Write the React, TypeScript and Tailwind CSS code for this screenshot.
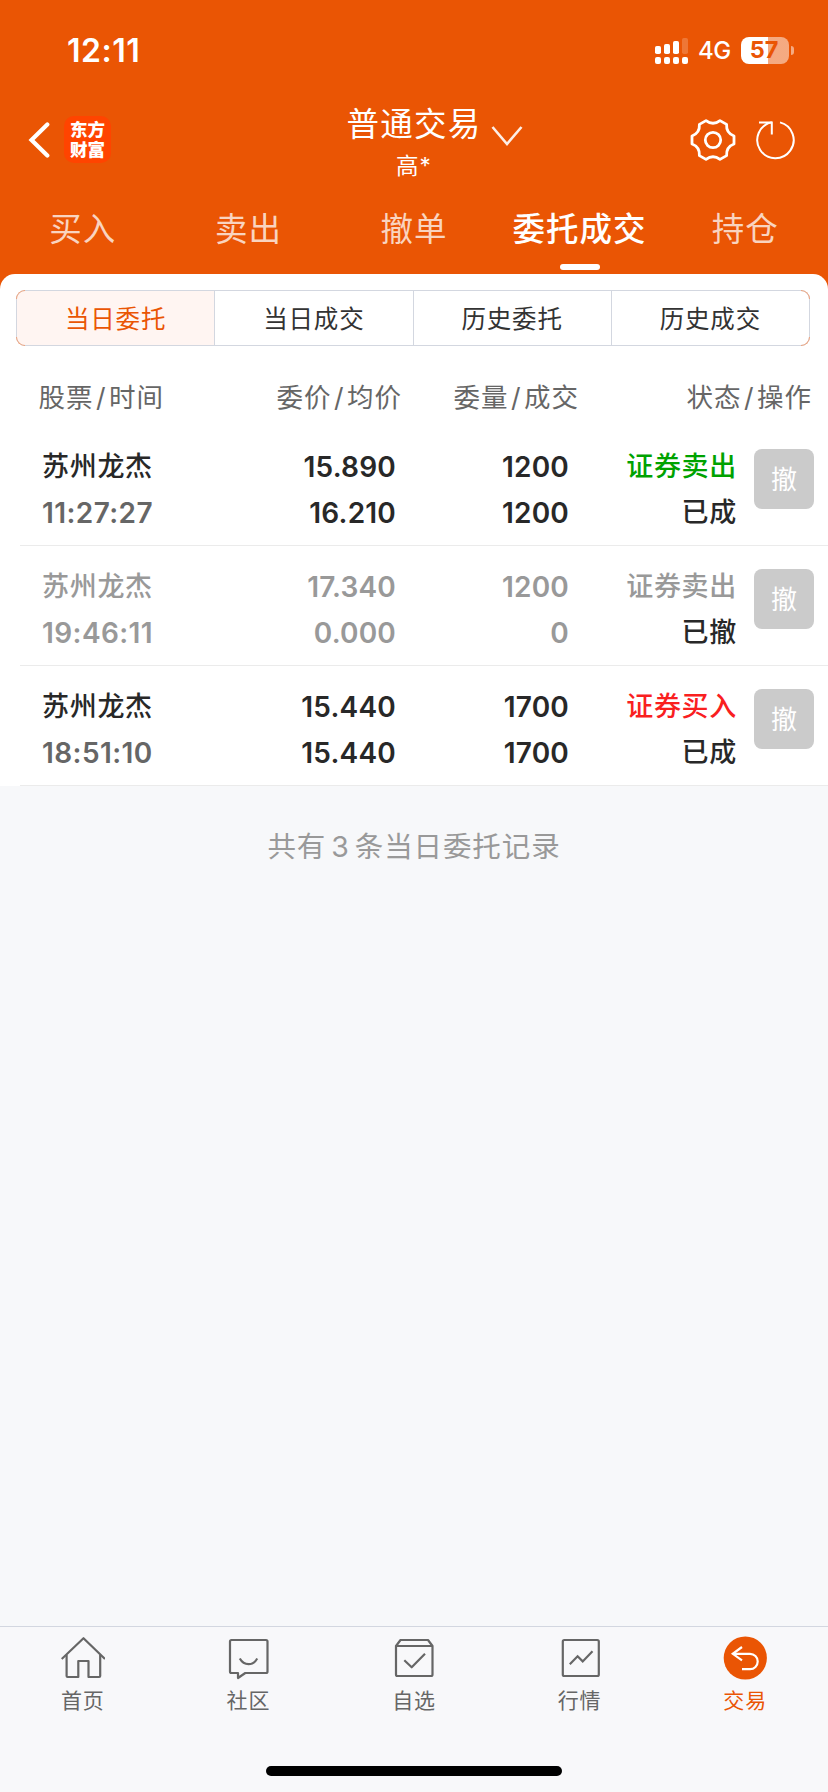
import type { ReactNode } from "react";
import clsx from "clsx";

interface Order {
    name: string;
    time: string;
    price: string;
    avgPrice: string;
    volume: string;
    dealt: string;
    side: string;
    sideColor: string;
    status: string;
    cancelled?: boolean;
}

const orders: Order[] = [
    { name: "苏州龙杰", time: "11:27:27", price: "15.890", avgPrice: "16.210", volume: "1200", dealt: "1200", side: "证券卖出", sideColor: "text-[#00a200]", status: "已成" },
    { name: "苏州龙杰", time: "19:46:11", price: "17.340", avgPrice: "0.000", volume: "1200", dealt: "0", side: "证券卖出", sideColor: "text-[#999999]", status: "已撤", cancelled: true },
    { name: "苏州龙杰", time: "18:51:10", price: "15.440", avgPrice: "15.440", volume: "1700", dealt: "1700", side: "证券买入", sideColor: "text-[#f9201f]", status: "已成" },
];

const tabs = ["买入", "卖出", "撤单", "委托成交", "持仓"];
const filters = ["当日委托", "当日成交", "历史委托", "历史成交"];

const columns = [
    { top: "股票", bottom: "时间", width: "w-[164px]" },
    { top: "委价", bottom: "均价", width: "w-[238px]" },
    { top: "委量", bottom: "成交", width: "w-[177px]" },
    { top: "状态", bottom: "操作", width: "w-[233px]" },
];

function StatusBar() {
    return (
        <div className="flex h-[100px] items-center pl-[67px] pr-[34px] text-white">
            <span className="pt-[1px] text-[32px] leading-none font-semibold tracking-[0.5px]">12:11</span>
            <svg className="ml-auto" width="33" height="27" viewBox="0 0 33 27" fill="white">
                <rect x="0" y="9" width="6" height="8" rx="1.8" />
                <rect x="9" y="7" width="6" height="10" rx="1.8" />
                <rect x="18" y="4" width="6" height="13" rx="1.8" />
                <rect x="27" y="1" width="6" height="16" rx="1.8" opacity="0.2" />
                <rect x="0" y="20" width="6" height="7" rx="2" />
                <rect x="9" y="20" width="6" height="7" rx="2" />
                <rect x="18" y="20" width="6" height="7" rx="2" />
                <rect x="27" y="20" width="6" height="7" rx="2" />
            </svg>
            <span className="ml-[10px] w-[43px] pt-[2px] text-[24px] leading-none font-medium tracking-[-0.5px]">4G</span>
            <div className="flex h-[27px] w-[48px] items-center justify-center rounded-[8px] bg-linear-to-r from-white from-56% to-white/50 to-56%">
                <span className="pr-[2px] text-[23.5px] leading-none font-bold text-[#ea5504]">57</span>
            </div>
            <div className="ml-[2px] h-[9px] w-[3px] rounded-r-full bg-white/50" />
        </div>
    );
}

function TitleBar() {
    return (
        <div className="relative flex h-[90px] items-center text-white">
            <svg className="ml-[28px] -mt-[10px]" width="22" height="36" viewBox="0 0 22 36" fill="none" stroke="white" strokeWidth="4.2">
                <path d="M19.3 2.5 3.5 18 19.3 33.5" strokeLinecap="round" />
            </svg>
            <div className="ml-[14px] -mt-[11px] grid size-[47px] place-content-center rounded-[10px] bg-[#ff4400] text-center text-[17.5px] leading-[20px] font-black">
                <span>东方</span>
                <span>财富</span>
            </div>
            <div className="absolute left-[300px] top-0 flex w-[228px] flex-col items-center">
                <span className="mt-[5px] text-[32.5px] leading-[40px] tracking-[1.3px]">普通交易</span>
                <span className="mt-[6px] text-[22.5px] leading-[30px] tracking-[1px]">高*</span>
            </div>
            <svg className="absolute left-[490px] top-[25px]" width="34" height="22" viewBox="0 0 34 22" fill="none" stroke="white" strokeWidth="2.6">
                <path d="M2.5 2 17 19 31.5 2" opacity="0.9" />
            </svg>
            <svg className="ml-auto -mt-[10px]" width="46" height="46" viewBox="0 0 46 46" fill="none" stroke="white" strokeWidth="2.8" strokeLinejoin="round">
                <path d="M16 3.6Q23 9 30 3.6L36.6 7.4Q36 16 44 19V27Q36 30 36.6 38.6L30 42.4Q23 37 16 42.4L9.4 38.6Q10 30 2 27V19Q10 16 9.4 7.4Z" />
                <circle cx="23" cy="23" r="7.7" />
            </svg>
            <svg className="ml-[20px] mr-[32px] -mt-[10px]" width="40" height="42" viewBox="0 0 40 42" fill="none" stroke="white" strokeWidth="2">
                <path d="M24 3.4A18.2 18.2 0 1 1 15.8 3.2" />
                <path d="M3 3.4H15.8V15.5" />
            </svg>
        </div>
    );
}

function FilterBar() {
    return (
        <div className="relative mt-[16px] ml-[16px] h-[56px] w-[794px]">
            <div className="flex h-full overflow-hidden rounded-[9px] border border-[#d3d7e0]">
                {filters.map((filter, i) => (
                    <div
                        key={filter}
                        className={clsx(
                            "flex-1 pt-[1px] text-center text-[24.5px] leading-[54px] tracking-[0.8px]",
                            i === 0 ? "bg-[#fff5f2] text-[#ea5504]" : "border-l border-[#d3d7e0] text-[#333333]"
                        )}
                    >
                        {filter}
                    </div>
                ))}
            </div>
            {/* tinted corners */}
            <i className="absolute left-0 top-0 size-[9px] rounded-tl-[9px] border-t border-l border-[#eda27c]" />
            <i className="absolute bottom-0 left-0 size-[9px] rounded-bl-[9px] border-b border-l border-[#eda27c]" />
            <i className="absolute right-0 top-0 size-[9px] rounded-tr-[9px] border-t border-r border-[#eda27c]" />
            <i className="absolute right-0 bottom-0 size-[9px] rounded-br-[9px] border-r border-b border-[#eda27c]" />
        </div>
    );
}

function OrderRow({ order }: { order: Order }) {
    const main = order.cancelled ? "text-[#999999]" : "text-[#282828]";
    const sub = order.cancelled ? "text-[#999999]" : "text-[#666666]";
    return (
        <div className="ml-[20px] flex h-[120px] border-b border-[#ebebeb] pt-[18px] text-[28px] leading-[46px] font-semibold tracking-[0.2px]">
            <div className={clsx("flex w-[180px] flex-col pl-[22px]", main)}>
                <span className="text-[27px] font-medium tracking-[0.7px]">{order.name}</span>
                <span className={clsx("tracking-[0.4px]", sub)}>{order.time}</span>
            </div>
            <div className={clsx("flex w-[196px] flex-col text-right", main)}>
                <span>{order.price}</span>
                <span>{order.avgPrice}</span>
            </div>
            <div className={clsx("flex w-[173px] flex-col text-right", main)}>
                <span>{order.volume}</span>
                <span>{order.dealt}</span>
            </div>
            <div className="flex w-[168px] flex-col text-right text-[27px] font-medium tracking-[0.7px] text-[#282828]">
                <span className={order.sideColor}>{order.side}</span>
                <span>{order.status}</span>
            </div>
            <button className="ml-[17px] mt-[5px] size-[60px] rounded-[8px] bg-[#cbcbcb] pt-[1px] text-[26px] leading-[59px] font-normal text-white">撤</button>
        </div>
    );
}

interface NavItemProps {
    label: string;
    active?: boolean;
    children: ReactNode;
}

function NavItem({ label, active, children }: NavItemProps) {
    return (
        <div className={clsx("flex flex-1 flex-col items-center pt-[9px]", active ? "text-[#ea5504]" : "text-[#666666]")}>
            <svg width="44" height="44" viewBox="0 0 44 44" fill="none" stroke="currentColor" strokeWidth="2.2" strokeLinejoin="round">
                {children}
            </svg>
            <span className="mt-[5px] text-[21px] leading-[32px] tracking-[0.8px]">{label}</span>
        </div>
    );
}

function BottomNav() {
    return (
        <nav className="flex h-[166px] flex-col border-t border-[#d3d7e0] bg-[#f8f8fa]">
            <div className="flex flex-1">
                <NavItem label="首页">
                    <path d="M.7 23 22.5 2.2 44 23" />
                    <path d="M5.6 19V40Q5.6 41 6.6 41H17.3V25H27.5V41H38.2Q39.2 41 39.2 40V19" />
                </NavItem>
                <NavItem label="社区">
                    <path d="M5.5 4H40Q41.5 4 41.5 5.5V35.5Q41.5 37 40 37H19.3L12 42V37H5.5Q4 37 4 35.5V5.5Q4 4 5.5 4Z" />
                    <path d="M13.8 22.5Q17 28.2 22.5 28.2T31.2 22.5" />
                </NavItem>
                <NavItem label="自选">
                    <path d="M4 10 8.5 4H36L40.5 10V38.5Q40.5 40 39 40H5.5Q4 40 4 38.5ZM4 10H40.5" />
                    <path d="M12.3 24.3 19.7 31.3 33 17.7" />
                </NavItem>
                <NavItem label="行情">
                    <rect x="4.8" y="4" width="36" height="36" rx="1.5" />
                    <path d="M11.8 28.2 19.6 20.3 24.7 25.4 34.5 15.3" strokeLinejoin="miter" />
                </NavItem>
                <NavItem label="交易" active>
                    <circle cx="22.3" cy="22" r="21.6" fill="#ea5504" stroke="none" />
                    <g stroke="white">
                        <path d="M19 11 9.8 17.8 19 24.3" strokeLinejoin="miter" />
                        <path d="M9.8 17.8H27A7.7 7.7 0 0 1 27 33.2H19" />
                    </g>
                </NavItem>
            </div>
            <div className="mx-auto mb-[16px] h-[10px] w-[296px] rounded-full bg-black" />
        </nav>
    );
}

export default function App() {
    return (
        <div lang="zh-CN" className="flex h-[1792px] w-[828px] flex-col overflow-hidden bg-[#f7f8fa] font-['Inter','Noto_Sans_CJK_SC',sans-serif]">
            <header className="-mb-[20px] h-[294px] bg-[#ea5504]">
                <StatusBar />
                <TitleBar />
                <div className="mt-[16px] flex text-center text-[32.5px] leading-[48px] tracking-[1px]">
                    {tabs.map((tab) => (
                        <div
                            key={tab}
                            className={clsx("flex flex-1 flex-col items-center", tab === "委托成交" ? "font-medium text-white" : "text-white/75")}
                        >
                            <span className="whitespace-nowrap">{tab}</span>
                            {tab === "委托成交" && <div className="mt-[10px] h-[6px] w-[40px] rounded-[3px] bg-white" />}
                        </div>
                    ))}
                </div>
            </header>

            <main className="rounded-t-[15px] bg-white">
                <FilterBar />
                <div className="flex h-[80px] pt-[31px] text-right text-[26.5px] leading-[40px] tracking-[1px] text-[#666666]">
                    {columns.map((col) => (
                        <span key={col.top} className={col.width}>
                            {col.top}
                            <span className="mx-[2.5px]">/</span>
                            {col.bottom}
                        </span>
                    ))}
                </div>
                {orders.map((order) => (
                    <OrderRow key={order.time} order={order} />
                ))}
            </main>

            <p className="mt-[41px] flex-1 text-center text-[28.5px] leading-[40px] tracking-[0.9px] text-[#999999]">
                共有<span className="mx-[5px]">3</span>条当日委托记录
            </p>

            <BottomNav />
        </div>
    );
}
